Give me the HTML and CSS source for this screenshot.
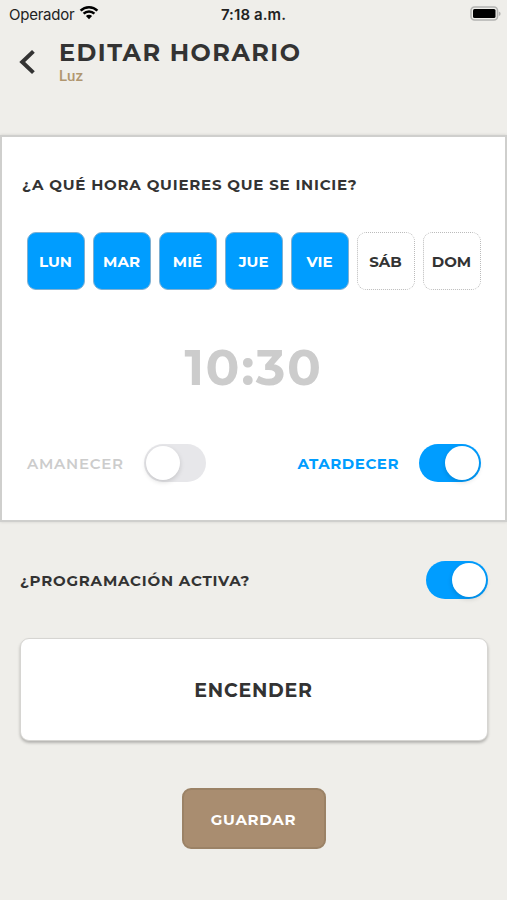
FILE: index.html
```html
<!DOCTYPE html>
<html lang="es">
<head>
  <meta charset="UTF-8">
  <meta name="viewport" content="width=device-width, initial-scale=1.0">
  <title>Editar horario</title>
  <link rel="stylesheet" href="styles.css">
</head>
<body>
  <div class="status-bar">
    <div class="carrier">
      <span>Operador</span>
      <svg class="wifi" width="20" height="15" viewBox="0 0 20 15">
        <path d="M1.6 5.6a12 12 0 0 1 16.8 0M4.6 8.7a7.8 7.8 0 0 1 10.8 0" fill="none" stroke="#000" stroke-width="2.5"/>
        <path d="M10 14.2L6.9 11.1a4.4 4.4 0 0 1 6.2 0z"/>
      </svg>
    </div>
    <span class="clock">7:18 a.m.</span>
    <svg class="battery" width="32" height="16" viewBox="0 0 32 16">
      <rect x="1" y="1" width="26.5" height="13" rx="3.5" fill="none" stroke="#b3b3b1" stroke-width="1.6"/>
      <rect x="3" y="3" width="22.5" height="9" rx="1.5"/>
      <path d="M28.8 5.5a2.3 2.3 0 0 1 0 4.5z" fill="#b3b3b1"/>
    </svg>
  </div>

  <header class="header">
    <svg class="back" width="18" height="26" viewBox="0 0 18 26">
      <path d="M15.4 2.4L4.2 13l11.2 10.6" fill="none" stroke="#333" stroke-width="4"/>
    </svg>
    <div class="titles">
      <h1>EDITAR HORARIO</h1>
      <p>Luz</p>
    </div>
  </header>

  <section class="panel">
    <h2 class="question">¿A QUÉ HORA QUIERES QUE SE INICIE?</h2>
    <div class="days">
      <div class="day active">LUN</div>
      <div class="day active">MAR</div>
      <div class="day active">MIÉ</div>
      <div class="day active">JUE</div>
      <div class="day active">VIE</div>
      <div class="day">SÁB</div>
      <div class="day">DOM</div>
    </div>
    <div class="time">10:30</div>
    <div class="options">
      <div class="option">
        <span>AMANECER</span>
        <div class="toggle"></div>
      </div>
      <div class="option selected">
        <span>ATARDECER</span>
        <div class="toggle on"></div>
      </div>
    </div>
  </section>

  <div class="enabled">
    <h2 class="question">¿PROGRAMACIÓN ACTIVA?</h2>
    <div class="toggle on"></div>
  </div>

  <button class="action">ENCENDER</button>
  <button class="save">GUARDAR</button>
</body>
</html>
```
FILE: styles.css
```css
* {
  box-sizing: border-box;
}

body {
  margin: 0;
  height: 900px;
  background-color: #efeeea;
  color: #333;
  font-family: Montserrat, Inter, sans-serif;
  overflow: hidden;
}

h1, h2, p {
  margin: 0;
}

svg {
  display: block;
}

.status-bar {
  display: grid;
  grid-template-columns: 1fr auto 1fr;
  align-items: center;
  height: 28px;
  padding: 0 6px 0 9px;
  font-family: Inter, sans-serif;
  font-size: 15px;
  color: #222;
}

.carrier {
  display: flex;
  align-items: center;
  gap: 5px;
  letter-spacing: -0.25px;
}

.wifi {
  margin-top: -3px;
}

.clock {
  margin-right: 3px;
  font-weight: 600;
  letter-spacing: 0.1px;
}

.battery {
  justify-self: end;
  margin: -1px -1px 0 0;
}

.header {
  display: flex;
  height: 107px;
  padding: 9px 0 0 18px;
}

.back {
  margin-top: 12px;
}

.titles {
  margin-left: 23px;
}

h1 {
  font-size: 24px;
  line-height: 31px;
  font-weight: 700;
  letter-spacing: 1.45px;
}

.titles p {
  font-family: Roboto, sans-serif;
  font-size: 15px;
  line-height: 17px;
  font-weight: 500;
  letter-spacing: 0.2px;
  color: #b0966f;
}

.panel {
  height: 387px;
  padding: 38px 24px 0 20px;
  background-color: #fff;
  border: 2px solid #cfcfcd;
  box-shadow: 0 0 3px rgba(0, 0, 0, 0.12);
}

.question {
  font-size: 15px;
  line-height: 20px;
  font-weight: 700;
  letter-spacing: 0.78px;
  white-space: nowrap;
}

.days {
  display: flex;
  gap: 8px;
  margin: 37px 0 0 5px;
}

.day {
  width: 58px;
  height: 58px;
  border: 1px dotted #bbb;
  border-radius: 9px;
  padding-right: 1px;
  font-size: 15px;
  line-height: 57px;
  font-weight: 700;
  text-align: center;
}

.day.active {
  background-color: #009dff;
  border: 1px solid #7fb0d2;
  color: #fff;
}

.time {
  margin: 48px 0 0 4px;
  font-size: 50px;
  line-height: 60px;
  font-weight: 700;
  letter-spacing: 1.6px;
  text-align: center;
  color: #ccc;
}

.options {
  display: flex;
  justify-content: space-between;
  margin: 46px 0 0 5px;
}

.option {
  display: flex;
  align-items: center;
  gap: 20px;
  font-size: 15px;
  font-weight: 600;
  letter-spacing: 0.75px;
  color: #ccc;
}

.option.selected {
  font-weight: 700;
  letter-spacing: 0.55px;
  color: #009dff;
}

.toggle {
  display: flex;
  width: 62px;
  height: 38px;
  padding: 2px;
  border-radius: 19px;
  background-color: #e7e7ea;
}

.toggle::before {
  content: "";
  width: 34px;
  height: 34px;
  border-radius: 50%;
  background-color: #fff;
  box-shadow: 0 2px 5px rgba(0, 0, 0, 0.15);
}

.toggle.on {
  justify-content: flex-end;
  background-color: #009dff;
}

.enabled {
  display: flex;
  justify-content: space-between;
  align-items: center;
  height: 38px;
  margin: 39px 19px 0 20px;
}

.enabled .question {
  padding-top: 2px;
}

button {
  display: block;
  font-family: inherit;
  font-weight: 700;
}

.action {
  width: 468px;
  height: 103px;
  margin: 39px auto 0;
  padding-top: 3px;
  border: 1px solid #d6d5d2;
  border-radius: 9px;
  background-color: #fff;
  box-shadow: 0 2px 3px rgba(0, 0, 0, 0.25);
  font-size: 19px;
  letter-spacing: 0.75px;
  color: #333;
}

.save {
  width: 144px;
  height: 61px;
  margin: 47px auto 0;
  padding-top: 3px;
  border: 2px solid #9b8266;
  border-radius: 9px;
  background-color: #a98d70;
  font-size: 15px;
  letter-spacing: 0.7px;
  color: #fff;
}
```
